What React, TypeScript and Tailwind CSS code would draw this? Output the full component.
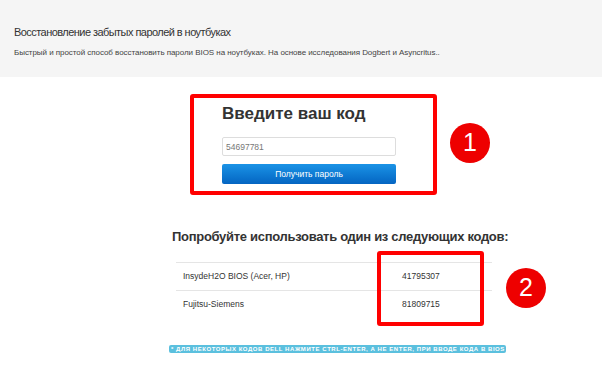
export default function App() {
  const rows = [
    { name: "InsydeH2O BIOS (Acer, HP)", code: "41795307" },
    { name: "Fujitsu-Siemens", code: "81809715" },
  ];

  return (
    <main
      className="relative h-[386px] w-[602px] overflow-hidden bg-white text-[#333]"
      style={{ fontFamily: '"Liberation Sans", Arial, sans-serif' }}
    >
      {/* header */}
      <div className="h-[77px] bg-[#f5f5f5] px-[14px] pt-[24px]">
        <h1 className="text-[11px] leading-[16px] tracking-[-0.55px] text-[#333]">
          Восстановление забытых паролей в ноутбуках
        </h1>
        <p className="mt-[7px] text-[8px] leading-[12px] tracking-[-0.05px] text-[#444]">
          Быстрый и простой способ восстановить пароли BIOS на ноутбуках. На основе исследования Dogbert и Asyncritus..
        </p>
      </div>

      {/* code form */}
      <div className="ml-[190px] mt-[17px] h-[101px] w-[247px] rounded-[3px] border-4 border-[#ff0000] pl-[28px] pt-[5px]">
        <h2 className="text-[17px] font-bold leading-[22px] text-[#333]">Введите ваш код</h2>
        <input
          readOnly
          value="54697781"
          className="mt-[12px] block h-[19px] w-[174px] rounded-[2px] border border-[#ddd] bg-white px-[3px] text-[8.5px] text-[#777] outline-none"
        />
        <button
          type="button"
          className="mt-[8px] block h-[20px] w-[174px] rounded-[2px] bg-gradient-to-b from-[#1b93e6] to-[#0565c2] text-[8.5px] text-white"
        >
          Получить пароль
        </button>
      </div>

      {/* codes */}
      <div className="ml-[172px] mt-[34px] w-[337px]">
        <h3 className="whitespace-nowrap text-[13px] font-bold leading-[16px] tracking-[-0.3px] text-[#333]">
          Попробуйте использовать один из следующих кодов:
        </h3>
        <div className="ml-[4px] mt-[17px] w-[316px] border-t border-[#e5e5e5]">
          {rows.map((r, i) => (
            <div
              key={r.code}
              className={[
                "flex h-[27px] items-center text-[8.5px] text-[#333]",
                i > 0 ? "border-t border-[#e5e5e5]" : "",
              ].join(" ")}
            >
              <span className="w-[226px] pl-[7px]">{r.name}</span>
              <span>{r.code}</span>
            </div>
          ))}
        </div>
        <div className="-ml-[3px] mt-[28px] flex h-[8px] w-[337px] items-center rounded-[2px] bg-[#5bc0de] px-[2px] text-[6px] font-bold uppercase leading-none tracking-[0.55px] whitespace-nowrap text-white">
          * Для некоторых кодов Dell нажмите Ctrl-Enter, а не Enter, при вводе кода в BIOS
        </div>
      </div>

      {/* annotations */}
      <div className="absolute left-[377px] top-[251px] h-[75px] w-[107px] rounded-[3px] border-4 border-[#ff0000]" />
      <div className="absolute left-[450px] top-[123px] flex h-[40px] w-[40px] items-center justify-center rounded-full bg-[#ee0000] text-[25px] text-white">
        1
      </div>
      <div className="absolute left-[506px] top-[268px] flex h-[40px] w-[40px] items-center justify-center rounded-full bg-[#ee0000] text-[25px] text-white">
        2
      </div>
    </main>
  );
}
